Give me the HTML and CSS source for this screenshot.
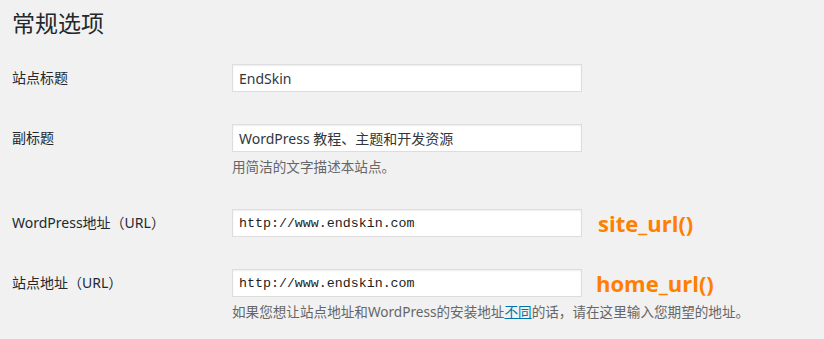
FILE: index.html
```html
<!DOCTYPE html>
<html lang="zh-CN">
<head>
    <meta charset="UTF-8">
    <title>常规选项</title>
    <link rel="stylesheet" href="styles.css">
</head>
<body>
    <div id="wrap">
        <h1>常规选项</h1>
        <form id="form" action="#" method="post">
            <!--站点标题-->
            <div class="row">
                <label for="blogname">站点标题</label>
                <div class="field">
                    <input id="blogname" class="regular" type="text" value="EndSkin">
                </div>
            </div>
            <!--副标题-->
            <div class="row">
                <label for="blogdesc">副标题</label>
                <div class="field">
                    <input id="blogdesc" class="regular" type="text" value="WordPress 教程、主题和开发资源">
                    <p class="description">用简洁的文字描述本站点。</p>
                </div>
            </div>
            <!--WordPress地址-->
            <div class="row">
                <label for="siteurl">WordPress地址（URL）</label>
                <div class="field">
                    <input id="siteurl" class="regular code" type="url" value="http://www.endskin.com">
                </div>
                <span class="note">site_url()</span>
            </div>
            <!--站点地址-->
            <div class="row">
                <label for="home">站点地址（URL）</label>
                <div class="field">
                    <input id="home" class="regular code" type="url" value="http://www.endskin.com">
                    <p class="description">如果您想让站点地址和WordPress的安装地址<a href="#">不同</a>的话，请在这里输入您期望的地址。</p>
                </div>
                <span class="note note-home">home_url()</span>
            </div>
        </form>
    </div>
</body>
</html>
```

FILE: styles.css
```css
*{
    margin: 0;
    padding: 0;
    box-sizing: border-box;
}
body{
    background: #f1f1f1;
    color: #23282d;
    font-family: "Noto Sans", "Noto Sans CJK SC", sans-serif;
    font-size: 14px;
}
#wrap{
    padding: 0 12px;
}
h1{
    font-size: 23px;
    font-weight: 400;
    line-height: 29px;
    padding-top: 9px;
    margin-bottom: 10px;
}
.row{
    display: grid;
    grid-template-columns: 220px 350px auto;
    align-items: start;
    padding: 16px 0;
}
.row label{
    line-height: 28px;
    color: #23282d;
}
.regular{
    display: block;
    width: 350px;
    height: 28px;
    padding: 0 6px;
    border: 1px solid #ddd;
    box-shadow: inset 0 1px 2px rgba(0, 0, 0, .07);
    background: #fff;
    color: #32373c;
    font-family: "Noto Sans", "Noto Sans CJK SC", sans-serif;
    font-size: 14px;
    outline: none;
}
.code{
    font-family: "Liberation Mono", monospace;
    font-size: 13.3px;
    color: #222;
}
.description{
    margin-top: 5px;
    line-height: 20px;
    font-size: 13.6px;
    color: #666;
    white-space: nowrap;
}
.description a{
    color: #0073aa;
}
.note{
    margin-left: 16px;
    line-height: 28px;
    font-family: "Open Sans", sans-serif;
    font-size: 22px;
    font-weight: 700;
    color: #ff7f00;
}
.note-home{
    margin-left: 14px;
}
```
